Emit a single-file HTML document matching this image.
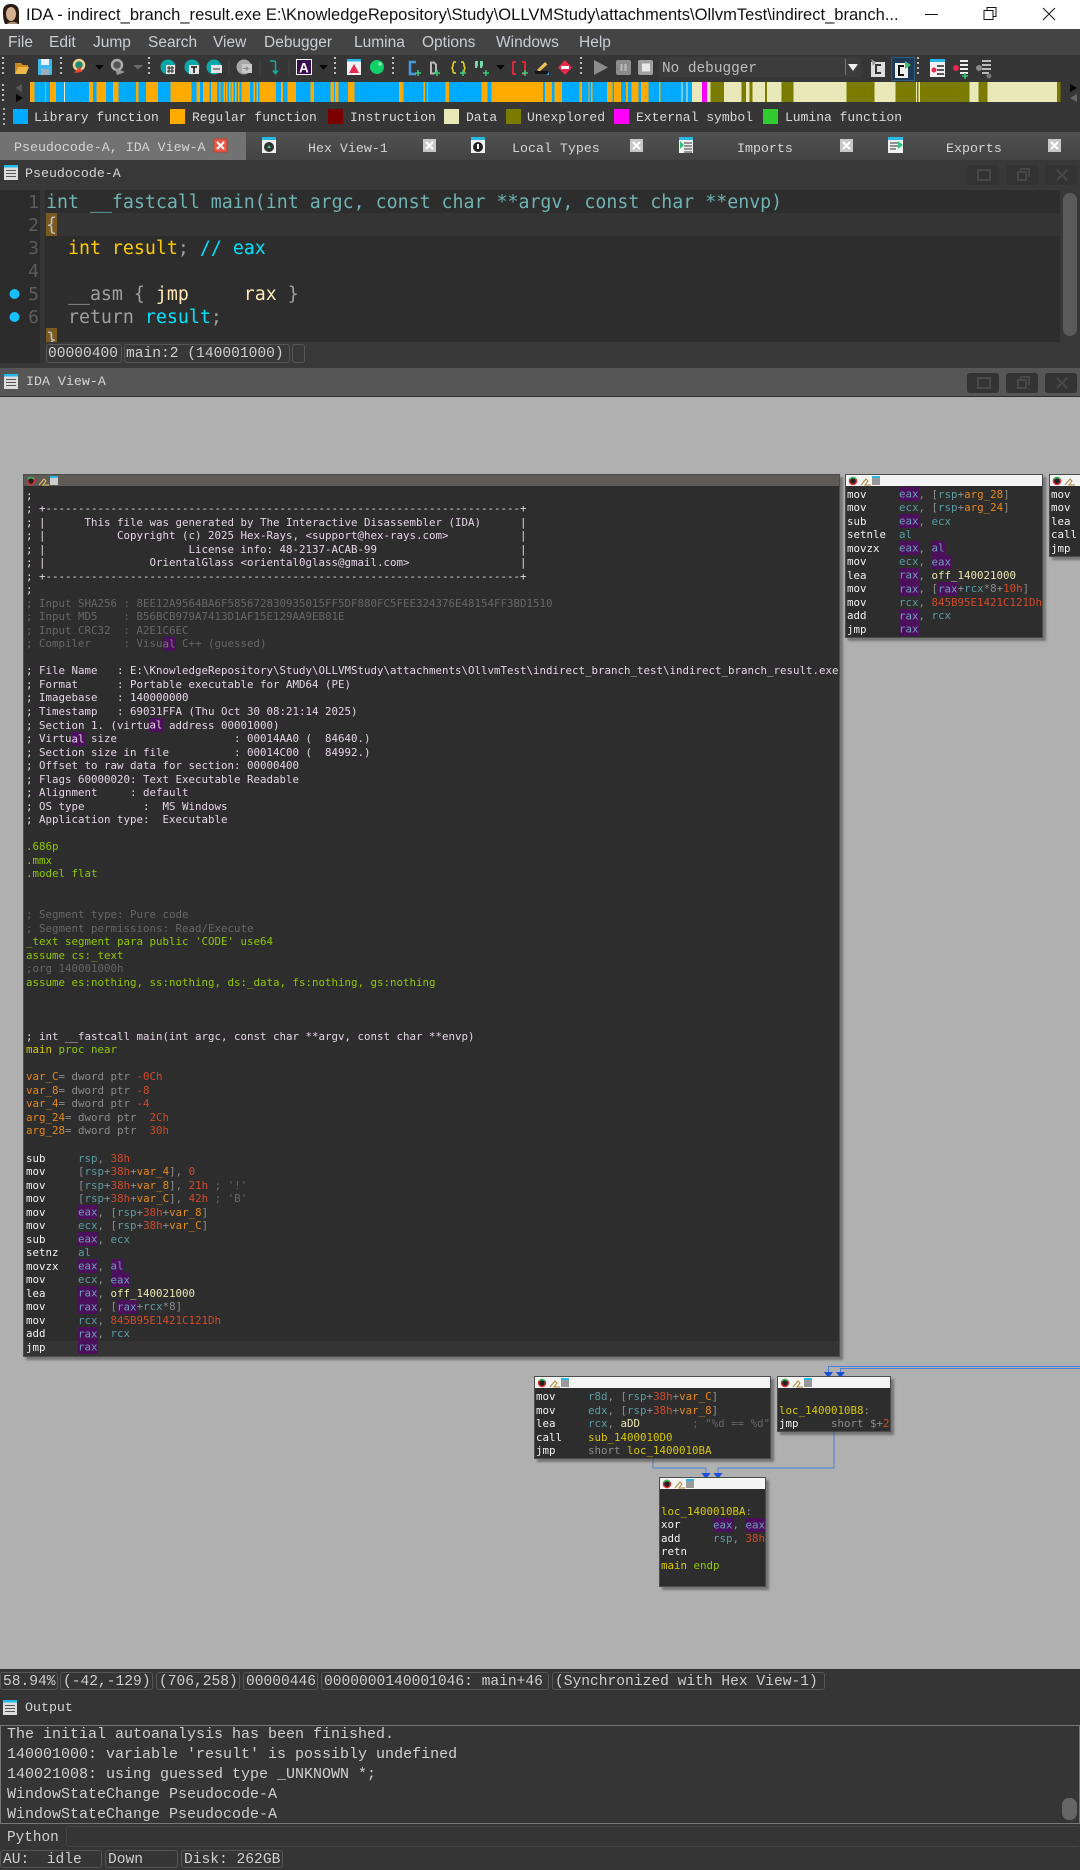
<!DOCTYPE html>
<html><head><meta charset="utf-8"><style>
html,body{margin:0;padding:0;width:1080px;height:1870px;overflow:hidden;background:#383838}
div,pre,span,svg{box-sizing:border-box}
.a{position:absolute}
.m{font-family:"Liberation Mono",monospace}
.mt{position:absolute;top:33px;font:15.5px/20px "Liberation Sans",sans-serif;color:#c9ced4}
.lg{position:absolute;top:109px;font:13px/18px "Liberation Mono",monospace;color:#d8d8d8;white-space:pre}
.sw{position:absolute;top:109px;width:15px;height:15px}
.tb{position:absolute;top:140px;font:13.3px/18px "Liberation Mono",monospace;color:#d4d4d4;white-space:pre}
.pill{position:absolute;border:1px solid #565656;border-radius:3px;font:14.6px/18px "Liberation Mono",monospace;color:#cfcfcf;white-space:pre;overflow:hidden;padding-left:2px}
.bk{position:absolute;background:#2d2d2d;border:1px solid #4c4c4c;box-shadow:3px 3px 2px rgba(60,60,60,.5);overflow:hidden}
.bt{position:absolute;left:0;top:0;right:0;height:11px;background:#f4f4f4}
pre{position:absolute;margin:0;left:1px;font:10.8px/13.53px "DejaVu Sans Mono",monospace;color:#f2f2f2;white-space:pre}
.r{color:#5b9ca3}.h{color:#6f9fb8;background:#4b0f5c;padding:.5px 0}.v{color:#e58a1a}.n{color:#cf4a2a}.g{color:#8c8c8c}
.y{color:#d8c800}.l{color:#8fc800}.c{color:#e4d4e6}.d{color:#666}.s{color:#e9e6b0}
.cd{position:absolute;left:1px;font:18.25px/23px "DejaVu Sans Mono",monospace;white-space:pre}
.ln{position:absolute;left:0;width:39px;text-align:right;font:18px/23px "DejaVu Sans Mono",monospace;color:#5c5c5c}
.wb{position:absolute;width:32px;height:20px;background:#333;border-radius:3px}
.ot{position:absolute;left:7px;font:15px/20px "Liberation Mono",monospace;color:#d0d0d0;white-space:pre}
</style></head><body>
<div class="a" style="left:0;top:0;width:1080px;height:1870px;overflow:hidden">

<!-- title bar -->
<div class="a" style="left:0;top:0;width:1080px;height:29px;background:#fff"></div>
<svg class="a" style="left:0;top:0" width="26" height="29"><path d="M3 11c0-6 5-7 8-7 5 0 8 3 8 8v12H5c-2-4-2-9-2-13z" fill="#2a1c14"/><ellipse cx="11" cy="14" rx="5" ry="7" fill="#d4b090"/><path d="M6 8c3-2 7-2 10 1l-1-4H8z" fill="#2a1c14"/><path d="M7 24c2-3 9-3 11 0z" fill="#a88a70"/></svg>
<div class="a" style="left:26px;top:4px;font:16.55px/22px 'Liberation Sans',sans-serif;color:#111;white-space:pre">IDA - indirect_branch_result.exe E:\KnowledgeRepository\Study\OLLVMStudy\attachments\OllvmTest\indirect_branch...</div>
<svg class="a" style="left:920px;top:0" width="160" height="29" fill="none" stroke="#111" stroke-width="1"><path d="M5 14.5h13M64 10.500h9v9h-9zM67 10.500v-3h9v9h-3"/><path d="M123 8l12 12M135 8l-12 12"/></svg>

<!-- menu -->
<div class="a" style="left:0;top:29px;width:1080px;height:26px;background:#444"></div>
<div class="mt" style="left:8px">File</div><div class="mt" style="left:49px">Edit</div><div class="mt" style="left:93px">Jump</div><div class="mt" style="left:148px">Search</div><div class="mt" style="left:213px">View</div><div class="mt" style="left:264px">Debugger</div><div class="mt" style="left:354px">Lumina</div><div class="mt" style="left:422px">Options</div><div class="mt" style="left:496px">Windows</div><div class="mt" style="left:579px">Help</div>

<!-- toolbar area -->
<div class="a" style="left:0;top:55px;width:1080px;height:77px;background:#363636"></div>
<svg class="a" style="left:0;top:55px" width="1080" height="26">
<g stroke="#bbb" stroke-width="2" stroke-dasharray="2 3"><path d="M3 2v20M61 2v20M149 2v20M335 2v20M393 2v20M581 2v20M918 2v20"/></g>
<!-- folder -->
<path d="M15 8h6l2 2h5v2H18l-3 7z" fill="#c98a1c"/><path d="M18 12h11l-3 7H15z" fill="#f0b848"/>
<!-- save -->
<rect x="38" y="4" width="14" height="16" rx="1" fill="#3cb8ee"/><rect x="41" y="4" width="8" height="6" fill="#e8f4fa"/><rect x="41" y="14" width="8" height="6" fill="#9ab0bc"/>
<!-- back -->
<circle cx="79" cy="10" r="5" fill="#1a8a70" stroke="#ecd090" stroke-width="2.500"/><path d="M74 18l6-7 2 6z" fill="#e8452c"/><path d="M95 10h9l-4.500 4.500z" fill="#050505"/>
<circle cx="117" cy="10" r="5" fill="#555" stroke="#aaa" stroke-width="2.500"/><path d="M115 13l10 4-8 3z" fill="#999"/><path d="M133 10h10l-5 4.500z" fill="#6a6a6a"/>
<!-- teal circles -->
<circle cx="168" cy="12" r="7.500" fill="#0aa8a8"/><rect x="166" y="10" width="9" height="9" fill="#e4e4e4"/><path d="M167 13h7M167 16h7M169 11v7M172 11v7" stroke="#222"/>
<circle cx="192" cy="12" r="7.500" fill="#0aa8a8"/><rect x="189" y="10" width="10" height="9" fill="#e4e4e4"/><path d="M191 12h6M194 12v6" stroke="#111" stroke-width="1.500"/>
<circle cx="214" cy="12" r="7.500" fill="#0aa8a8"/><rect x="211" y="10" width="11" height="8" fill="#e4e4e4"/><path d="M213 14h7" stroke="#333"/>
<circle cx="244" cy="12" r="7.500" fill="#a8a8a8"/><rect x="242" y="9" width="10" height="9" fill="#c8c8c8"/><path d="M243 13.500h5l-2-2m2 2l-2 2" stroke="#888" fill="none"/>
<path d="M229 4v17M260 4v17M289 4v17" stroke="#444"/>
<!-- teal arrow -->
<path d="M270 6h4q1.500 0 1.500 2v9" fill="none" stroke="#18a8a0" stroke-width="1.500"/><path d="M272 15.500h7l-3.500 4.500z" fill="#18a8a0"/>
<!-- A -->
<rect x="296.500" y="4.500" width="15" height="15" fill="#3c0a50" stroke="#fff"/><text x="299" y="17.500" font-family="Liberation Sans" font-weight="bold" font-size="13.500" fill="#fff">A</text><path d="M319 10h9l-4.500 4.500z" fill="#050505"/>
<!-- red tri -->
<rect x="347" y="5" width="14" height="15" fill="#f0f0f0"/><rect x="347" y="4" width="14" height="2.500" fill="#28b8e8"/><path d="M349 18l5-9 5 9z" fill="#e8284c"/>
<circle cx="377" cy="12" r="7" fill="#10d068"/><circle cx="380" cy="9" r="1.800" fill="#90f0b0"/>
<!-- C D {} "" [] -->
<path d="M416 7h-6v12h6" fill="none" stroke="#4a98e0" stroke-width="2.500"/>
<path d="M431 7.500h3l2 2v8l-2 1h-3z" fill="none" stroke="#b8b8b8" stroke-width="2"/>
<path d="M456 7h-2l-1 2v2l-1 2 1 2v2l1 1h2M461 7h2l1 2v2l1 2-1 2v2l-1 1h-2" fill="none" stroke="#e8d820" stroke-width="1.500"/>
<path d="M475 6h3v4l-1 3h-2zM480 6h3v4l-1 3h-2z" fill="#78d8a8"/><path d="M496 10h9l-4.500 4.500z" fill="#050505"/>
<path d="M516 7h-3v12h3M522 7h3v12h-3" fill="none" stroke="#e82838" stroke-width="1.800"/>
<path d="M415 18h6M418 15v6M434 18h6M437 15v6M460 18h6M463 15v6M483 18h6M486 15v6M522 18h6M525 15v6" stroke="#3cc878" stroke-width="1.500"/>
<path d="M537 15l8-8 2.500 2.500-8 7z" fill="#ecc060"/><rect x="535" y="16" width="13" height="3" fill="#151515"/><path d="M546 20h3v-3z" fill="#2a90d0"/>
<path d="M565 5l7 7.500-7 7.500-7-7.500z" fill="#e8284c"/><rect x="561" y="11" width="8" height="3" fill="#fff"/>
<!-- debug -->
<path d="M594 5l14 7.500-14 7.500z" fill="#8c8c8c"/><rect x="616" y="5" width="15" height="15" rx="2" fill="#8c8c8c"/><path d="M621.500 9v7M625.500 9v7" stroke="#bbb" stroke-width="2"/><rect x="638" y="5" width="15" height="15" rx="2" fill="#a0a0a0"/><rect x="642" y="8.500" width="8" height="8" fill="#e8e8e8"/>
<!-- right icons -->
<rect x="871" y="7" width="14" height="15" fill="#ddd"/><path d="M881 10h-5v8h5" fill="none" stroke="#333" stroke-width="2"/><path d="M871 4l5 3-3 4z" fill="#999"/>
<rect x="891.500" y="2.500" width="23" height="23" fill="#1f3a52" stroke="#2c5c82"/><rect x="895" y="8" width="13" height="15" fill="#eee"/><path d="M904 11h-5v9h5" fill="none" stroke="#111" stroke-width="2"/><path d="M905 6l6 4-6 4z" fill="#3cc070"/>
<rect x="930" y="6" width="15" height="16" fill="#f0f0f0"/><rect x="930" y="4" width="15" height="3" fill="#28b8e8"/><circle cx="934" cy="15" r="2.500" fill="#e8284c"/><path d="M937 11h7M937 15h7M937 19h7" stroke="#222" stroke-width="1.500"/>
<circle cx="956" cy="13" r="3" fill="#e8284c"/><path d="M960 6h8M960 10h8M960 14h8M960 18h8" stroke="#eee" stroke-width="2"/><path d="M962 21h6M965 18v6" stroke="#3cc070" stroke-width="1.500"/>
<circle cx="979" cy="13" r="3" fill="#888"/><path d="M982 6h9M982 10h9M982 14h9M982 18h7" stroke="#bbb" stroke-width="2"/><circle cx="989" cy="21" r="2.500" fill="#777"/>
</svg>
<div class="a" style="left:659px;top:57px;width:202px;height:20px;background:#3c3c3c;border-radius:3px"></div>
<div class="a m" style="left:662px;top:60px;font-size:14.400px;line-height:18px;color:#bdbdbd;white-space:pre">No debugger</div>
<div class="a" style="left:845px;top:59px;width:1px;height:16px;background:#777"></div>
<svg class="a" style="left:846px;top:60px" width="14" height="14"><path d="M2 4h10l-5 7z" fill="#f0f0f0"/></svg>

<!-- nav strip -->
<svg class="a" style="left:0;top:80px" width="1080" height="24" shape-rendering="crispEdges">
<path d="M15 8l7-4v8z" fill="#555"/><path d="M16 14l7 4-7 4z" fill="#000"/><path d="M1070 4l7 4-7 4z" fill="#000"/><path d="M1077 14l-7 4 7 4z" fill="#666"/>
<path d="M3 4v18" stroke="#bbb" stroke-width="2" stroke-dasharray="2 3"/>
<rect x="30" y="2" width="1030" height="20" fill="#00aaff"/>
<g fill="#ffaa00" transform="scale(.3448,1)"><rect x="87" y="2" width="13" height="20"/><rect x="130" y="2" width="4" height="20"/><rect x="145" y="2" width="18" height="20"/><rect x="186" y="2" width="3" height="20" fill="#e8e8b8"/><rect x="258" y="2" width="12" height="20"/><rect x="280" y="2" width="28" height="20"/><rect x="328" y="2" width="16" height="20"/><rect x="395" y="2" width="6" height="20"/><rect x="424" y="2" width="34" height="20"/><rect x="494" y="2" width="61" height="20"/><rect x="570" y="2" width="10" height="20"/><rect x="589" y="2" width="19" height="20"/><rect x="612" y="2" width="18" height="20"/><rect x="636" y="2" width="4" height="20"/><rect x="648" y="2" width="4" height="20"/><rect x="656" y="2" width="4" height="20"/><rect x="664" y="2" width="4" height="20"/><rect x="672" y="2" width="5" height="20"/><rect x="682" y="2" width="4" height="20"/><rect x="690" y="2" width="4" height="20"/><rect x="700" y="2" width="25" height="20"/><rect x="735" y="2" width="4" height="20"/><rect x="744" y="2" width="4" height="20"/><rect x="752" y="2" width="48" height="20"/><rect x="815" y="2" width="6" height="20"/><rect x="834" y="2" width="24" height="20"/><rect x="900" y="2" width="10" height="20"/><rect x="958" y="2" width="10" height="20"/><rect x="972" y="2" width="10" height="20"/><rect x="1010" y="2" width="18" height="20"/><rect x="1157" y="2" width="13" height="20"/><rect x="1228" y="2" width="4" height="20"/><rect x="1238" y="2" width="3" height="20"/><rect x="1292" y="2" width="10" height="20"/><rect x="1397" y="2" width="17" height="20"/><rect x="1425" y="2" width="143" height="20"/></g>
<g fill="#ffaa00" transform="translate(540,0) scale(.3448,1)"><rect x="0" y="2" width="8" height="20"/><rect x="15" y="2" width="20" height="20"/><rect x="42" y="2" width="22" height="20"/><rect x="115" y="2" width="7" height="20"/><rect x="140" y="2" width="4" height="20"/><rect x="148" y="2" width="4" height="20"/><rect x="195" y="2" width="15" height="20"/><rect x="215" y="2" width="20" height="20"/><rect x="250" y="2" width="5" height="20"/><rect x="265" y="2" width="20" height="20"/><rect x="293" y="2" width="22" height="20"/><rect x="345" y="2" width="5" height="20"/><rect x="411" y="2" width="3" height="20" fill="#e8e8b8"/><rect x="425" y="2" width="3" height="20" fill="#e8e8b8"/>
<rect x="441" y="2" width="1069" height="20" fill="#e8e8b8"/><rect x="470" y="2" width="15" height="20" fill="#ff00ff"/><rect x="495" y="2" width="39" height="20" fill="#7b7b00"/><rect x="585" y="2" width="12" height="20" fill="#7b7b00"/><rect x="607" y="2" width="9" height="20" fill="#7b7b00"/><rect x="652" y="2" width="6" height="20" fill="#7b7b00"/><rect x="700" y="2" width="35" height="20" fill="#7b7b00"/><rect x="889" y="2" width="81" height="20" fill="#7b7b00"/><rect x="1031" y="2" width="59" height="20" fill="#7b7b00"/><rect x="1094" y="2" width="4" height="20" fill="#7b7b00"/><rect x="1102" y="2" width="144" height="20" fill="#7b7b00"/><rect x="1272" y="2" width="26" height="20" fill="#7b7b00"/><rect x="1500" y="2" width="10" height="20" fill="#7b7b00"/></g>
</svg>

<!-- legend -->
<svg class="a" style="left:0;top:106px" width="8" height="24"><path d="M4 2v20" stroke="#aaa" stroke-width="2" stroke-dasharray="2 3"/></svg>
<div class="sw" style="left:13px;background:#00aaff"></div><div class="lg" style="left:34px">Library function</div>
<div class="sw" style="left:170px;background:#ffaa00"></div><div class="lg" style="left:192px">Regular function</div>
<div class="sw" style="left:328px;background:#7a0000"></div><div class="lg" style="left:350px">Instruction</div>
<div class="sw" style="left:444px;background:#e8e8b8"></div><div class="lg" style="left:466px">Data</div>
<div class="sw" style="left:506px;background:#7b7b00"></div><div class="lg" style="left:527px">Unexplored</div>
<div class="sw" style="left:614px;background:#ff00ff"></div><div class="lg" style="left:636px">External symbol</div>
<div class="sw" style="left:763px;background:#30cc30"></div><div class="lg" style="left:785px">Lumina function</div>

<!-- tabs -->
<div class="a" style="left:0;top:132px;width:1080px;height:28px;background:linear-gradient(#515151,#434343)"></div>
<div class="a" style="left:0;top:132px;width:246px;height:28px;background:#727272"></div>
<div class="tb" style="left:14px;top:139px">Pseudocode-A, IDA View-A</div><div class="tb" style="left:308px">Hex View-1</div><div class="tb" style="left:512px">Local Types</div><div class="tb" style="left:737px">Imports</div><div class="tb" style="left:946px">Exports</div>
<svg class="a" style="left:0;top:132px" width="1080" height="28">
<rect x="214" y="7" width="13" height="13" fill="#e85a4a" stroke="#c04030"/><path d="M217 10l7 7M224 10l-7 7" stroke="#fff" stroke-width="2"/>
<g fill="#c8c8c8"><rect x="423" y="7" width="13" height="13"/><rect x="630" y="7" width="13" height="13"/><rect x="840" y="7" width="13" height="13"/><rect x="1048" y="7" width="13" height="13"/></g>
<path d="M426 10l7 7M433 10l-7 7M633 10l7 7M640 10l-7 7M843 10l7 7M850 10l-7 7M1051 10l7 7M1058 10l-7 7" stroke="#fff" stroke-width="2"/>
<g fill="#f0f0f0"><rect x="262" y="7" width="14" height="14"/><rect x="471" y="7" width="14" height="14"/><rect x="679" y="7" width="14" height="14"/><rect x="888" y="7" width="15" height="14"/></g>
<g fill="#28b8e8"><rect x="262" y="5" width="14" height="3"/><rect x="471" y="5" width="14" height="3"/><rect x="679" y="5" width="14" height="3"/><rect x="888" y="5" width="15" height="3"/></g>
<circle cx="269" cy="15" r="5" fill="#333"/><path d="M267 16l2-3 2 3z" fill="#30d080"/><circle cx="478" cy="15" r="5" fill="#222"/><rect x="477" y="12" width="2" height="5" fill="#fff"/>
<path d="M684 11h8M684 14h8M684 17h8M684 20h8M890 11h8M890 14h8M890 17h6" stroke="#333"/><path d="M680 9l4 4-4 4z" fill="#30c080"/><path d="M898 9l5 4-5 4z" fill="#30c080"/>
</svg>

<!-- Pseudocode panel -->
<div class="a" style="left:0;top:160px;width:1080px;height:208px;background:#383838"></div>
<svg class="a" style="left:4px;top:165px" width="14" height="16"><rect width="14" height="13" y="2" fill="#ddd"/><rect width="14" height="2.500" y="0" fill="#28b8e8"/><path d="M2 5.500h10M2 8.500h10M2 11.500h10" stroke="#555"/></svg>
<div class="a m" style="left:25px;top:165px;font-size:13.300px;line-height:18px;color:#d4d4d4">Pseudocode-A</div>
<div class="wb" style="left:967px;top:165px"></div><div class="wb" style="left:1006px;top:165px"></div><div class="wb" style="left:1045px;top:165px"></div>
<svg class="a" style="left:960px;top:165px" width="120" height="20" fill="none" stroke="#474747" stroke-width="2"><path d="M18 5h12v10H18zM58 7h8v8h-8zM61 7V4h8v8M97 5l10 10M107 5L97 15"/></svg>
<div class="a" style="left:0;top:190px;width:40px;height:173px;background:#2b2b2b"></div>
<div class="a" style="left:40px;top:190px;width:5px;height:173px;background:#353535"></div>
<div class="a" style="left:45px;top:190px;width:1015px;height:152px;background:#2d2d2d;overflow:hidden">
<div class="a" style="left:0;top:23px;width:1015px;height:23px;background:#343434"></div>
<div class="a" style="left:1px;top:23px;width:11px;height:23px;background:#7a5a20"></div>
<div class="a" style="left:1px;top:138px;width:11px;height:14px;background:#7a5a20"></div>
<div class="cd" style="top:1px;color:#6fb3b3">int __fastcall main(int argc, const char **argv, const char **envp)</div>
<div class="cd" style="top:24px;color:#c0c0c0">{</div>
<div class="cd" style="top:47px;color:#ffcc00">  int result<span style="color:#a0a0a0">;</span> <span style="color:#00e5ff">// eax</span></div>
<div class="cd" style="top:93px;color:#a0a0a0">  __asm { <span style="color:#ffe9b8">jmp     rax</span> }</div>
<div class="cd" style="top:116px;color:#a0a0a0">  return <span style="color:#00e5ff">result</span>;</div>
<div class="cd" style="top:139px;color:#c0c0c0">}</div>
</div>
<div class="ln" style="top:191px">1</div><div class="ln" style="top:214px">2</div><div class="ln" style="top:237px">3</div><div class="ln" style="top:260px">4</div><div class="ln" style="top:283px">5</div><div class="ln" style="top:306px">6</div>
<svg class="a" style="left:8px;top:285px" width="14" height="40"><circle cx="6.500" cy="9" r="5" fill="#18bfff"/><circle cx="6.500" cy="32" r="5" fill="#18bfff"/></svg>
<div class="a" style="left:1063px;top:193px;width:14px;height:143px;border-radius:7px;background:#5a5a5a"></div>
<div class="pill" style="left:46px;top:344px;width:76px;height:19px;padding-left:1px">00000400</div>
<div class="pill" style="left:124px;top:344px;width:166px;height:19px;padding-left:1px">main:2 (140001000)</div>
<div class="pill" style="left:292px;top:344px;width:13px;height:19px"></div>

<!-- IDA View title -->
<div class="a" style="left:0;top:368px;width:1080px;height:28px;background:#565656"></div>
<div class="a" style="left:0;top:396px;width:1080px;height:1px;background:#2e2e2e"></div>
<svg class="a" style="left:4px;top:374px" width="14" height="16"><rect width="14" height="13" y="2" fill="#ddd"/><rect width="14" height="2.500" y="0" fill="#28b8e8"/><path d="M2 5.500h10M2 8.500h10M2 11.500h10" stroke="#555"/></svg>
<div class="a m" style="left:26px;top:373px;font-size:13.300px;line-height:18px;color:#d4d4d4">IDA View-A</div>
<div class="wb" style="left:967px;top:373px"></div><div class="wb" style="left:1006px;top:373px"></div><div class="wb" style="left:1045px;top:373px"></div>
<svg class="a" style="left:960px;top:373px" width="120" height="20" fill="none" stroke="#484848" stroke-width="2"><path d="M18 5h12v10H18zM58 7h8v8h-8zM61 7V4h8v8M97 5l10 10M107 5L97 15"/></svg>

<!-- Graph -->
<div class="a" style="left:0;top:397px;width:1080px;height:1272px;background:#b0b0b0"></div>

<svg class="a" style="left:0;top:1340px" width="1080" height="150" fill="none">
<path d="M1080 26.500H828.500V36M1080 28.500H840.500V36" stroke="#4a7fd8" stroke-width="1"/>
<path d="M653 119v9h53v10M834 92v36H718v10" stroke="#4a7fd8" stroke-width="1"/>
<path d="M824 32h9l-4.500 6zM836 32h9l-4.500 6z" fill="#1750d8"/><path d="M701.500 133h9l-4.500 6zM713.500 133h9l-4.500 6z" fill="#1750d8"/>
</svg>

<!-- main block -->
<div class="bk" style="left:23px;top:474px;width:817px;height:883px">
<div class="bt" style="background:#5e5a55"></div>
<svg class="a" style="left:2px;top:1px" width="34" height="10"><circle cx="5" cy="5" r="3.500" fill="#222" stroke="#e03030" stroke-width="1.500"/><path d="M2 3a4 4 0 0 1 6 0" stroke="#30c060" stroke-width="1.500" fill="none"/><path d="M13 9l5-6 2 2-3 4h6" stroke="#ecc060" fill="none"/><rect x="24" y="1" width="8" height="8" fill="#ccc"/><rect x="24" y="0" width="8" height="2" fill="#28b8e8"/></svg>
<div class="a" style="left:0;top:866px;width:817px;height:15px;background:#343434"></div>
<pre style="top:13.500px;left:2px"><span class="c">;
; +-------------------------------------------------------------------------+
; |      This file was generated by The Interactive Disassembler (IDA)      |
; |           Copyright (c) 2025 Hex-Rays, &lt;support@hex-rays.com&gt;           |
; |                      License info: 48-2137-ACAB-99                      |
; |                OrientalGlass &lt;oriental0glass@gmail.com&gt;                 |
; +-------------------------------------------------------------------------+
;
</span><span class="d">; Input SHA256 : 8EE12A9564BA6F585672830935015FF5DF880FC5FEE324376E48154FF3BD1510
; Input MD5    : B56BCB979A7413D1AF15E129AA9EB01E
; Input CRC32  : A2E1C6EC
; Compiler     : Visu<span class="h" style="color:#777">al</span> C++ (guessed)
</span>
<span class="c">; File Name   : E:\KnowledgeRepository\Study\OLLVMStudy\attachments\OllvmTest\indirect_branch_test\indirect_branch_result.exe
; Format      : Portable executable for AMD64 (PE)
; Imagebase   : 140000000
; Timestamp   : 69031FFA (Thu Oct 30 08:21:14 2025)
; Section 1. (virtu<span class="h" style="color:#e4d4e6">al</span> address 00001000)
; Virtu<span class="h" style="color:#e4d4e6">al</span> size                  : 00014AA0 (  84640.)
; Section size in file          : 00014C00 (  84992.)
; Offset to raw data for section: 00000400
; Flags 60000020: Text Executable Readable
; Alignment     : default
; OS type         :  MS Windows
; Application type:  Executable
</span>
<span class="l">.686p
.mmx
.model flat</span>


<span class="d">; Segment type: Pure code
; Segment permissions: Read/Execute</span>
<span class="l">_text segment para public 'CODE' use64
assume cs:_text</span>
<span class="d">;org 140001000h</span>
<span class="l">assume es:nothing, ss:nothing, ds:_data, fs:nothing, gs:nothing</span>



<span class="c">; int __fastcall main(int argc, const char **argv, const char **envp)</span>
<span class="y">main</span> <span class="l">proc near</span>

<span class="v">var_C</span><span class="g">= dword ptr </span><span class="n">-0Ch</span>
<span class="v">var_8</span><span class="g">= dword ptr </span><span class="n">-8</span>
<span class="v">var_4</span><span class="g">= dword ptr </span><span class="n">-4</span>
<span class="v">arg_24</span><span class="g">= dword ptr  </span><span class="n">2Ch</span>
<span class="v">arg_28</span><span class="g">= dword ptr  </span><span class="n">30h</span>

sub     <span class="r">rsp</span><span class="g">, </span><span class="n">38h</span>
mov     <span class="g">[</span><span class="r">rsp</span><span class="g">+</span><span class="n">38h</span><span class="g">+</span><span class="v">var_4</span><span class="g">], </span><span class="n">0</span>
mov     <span class="g">[</span><span class="r">rsp</span><span class="g">+</span><span class="n">38h</span><span class="g">+</span><span class="v">var_8</span><span class="g">], </span><span class="n">21h</span> <span class="d">; '!'</span>
mov     <span class="g">[</span><span class="r">rsp</span><span class="g">+</span><span class="n">38h</span><span class="g">+</span><span class="v">var_C</span><span class="g">], </span><span class="n">42h</span> <span class="d">; 'B'</span>
mov     <span class="h">eax</span><span class="g">, [</span><span class="r">rsp</span><span class="g">+</span><span class="n">38h</span><span class="g">+</span><span class="v">var_8</span><span class="g">]</span>
mov     <span class="r">ecx</span><span class="g">, [</span><span class="r">rsp</span><span class="g">+</span><span class="n">38h</span><span class="g">+</span><span class="v">var_C</span><span class="g">]</span>
sub     <span class="h">eax</span><span class="g">, </span><span class="r">ecx</span>
setnz   <span class="r">al</span>
movzx   <span class="h">eax</span><span class="g">, </span><span class="h">al</span>
mov     <span class="r">ecx</span><span class="g">, </span><span class="h">eax</span>
lea     <span class="h">rax</span><span class="g">, </span><span class="s">off_140021000</span>
mov     <span class="h">rax</span><span class="g">, [</span><span class="h">rax</span><span class="g">+</span><span class="r">rcx</span><span class="g">*8]</span>
mov     <span class="r">rcx</span><span class="g">, </span><span class="n">845B95E1421C121Dh</span>
add     <span class="h">rax</span><span class="g">, </span><span class="r">rcx</span>
jmp     <span class="h">rax</span></pre>
</div>

<!-- right block -->
<div class="bk" style="left:845px;top:474px;width:198px;height:164px">
<div class="bt"></div>
<svg class="a" style="left:2px;top:1px" width="34" height="10"><circle cx="5" cy="5" r="3.500" fill="#222" stroke="#e03030" stroke-width="1.500"/><path d="M2 3a4 4 0 0 1 6 0" stroke="#30c060" stroke-width="1.500" fill="none"/><path d="M13 9l5-6 2 2-3 4h6" stroke="#b08830" fill="none"/><rect x="24" y="1" width="8" height="8" fill="#999"/><rect x="24" y="0" width="8" height="2" fill="#28b8e8"/></svg>
<pre style="top:12.500px">mov     <span class="h">eax</span><span class="g">, [</span><span class="r">rsp</span><span class="g">+</span><span class="v">arg_28</span><span class="g">]</span>
mov     <span class="r">ecx</span><span class="g">, [</span><span class="r">rsp</span><span class="g">+</span><span class="v">arg_24</span><span class="g">]</span>
sub     <span class="h">eax</span><span class="g">, </span><span class="r">ecx</span>
setnle  <span class="r">al</span>
movzx   <span class="h">eax</span><span class="g">, </span><span class="h">al</span>
mov     <span class="r">ecx</span><span class="g">, </span><span class="h">eax</span>
lea     <span class="h">rax</span><span class="g">, </span><span class="s">off_140021000</span>
mov     <span class="h">rax</span><span class="g">, [</span><span class="h">rax</span><span class="g">+</span><span class="r">rcx</span><span class="g">*8+</span><span class="n">10h</span><span class="g">]</span>
mov     <span class="r">rcx</span><span class="g">, </span><span class="n">845B95E1421C121Dh</span>
add     <span class="h">rax</span><span class="g">, </span><span class="r">rcx</span>
jmp     <span class="h">rax</span></pre>
</div>

<div class="bk" style="left:1049px;top:474px;width:40px;height:83px">
<div class="bt"></div>
<svg class="a" style="left:2px;top:1px" width="34" height="10"><circle cx="5" cy="5" r="3.500" fill="#222" stroke="#e03030" stroke-width="1.500"/><path d="M2 3a4 4 0 0 1 6 0" stroke="#30c060" stroke-width="1.500" fill="none"/><path d="M13 9l5-6 2 2-3 4h6" stroke="#b08830" fill="none"/></svg>
<pre style="top:12.500px">mov
mov
lea
call
jmp</pre>
</div>

<div class="bk" style="left:534px;top:1376px;width:237px;height:83px">
<div class="bt"></div>
<svg class="a" style="left:2px;top:1px" width="34" height="10"><circle cx="5" cy="5" r="3.500" fill="#222" stroke="#e03030" stroke-width="1.500"/><path d="M2 3a4 4 0 0 1 6 0" stroke="#30c060" stroke-width="1.500" fill="none"/><path d="M13 9l5-6 2 2-3 4h6" stroke="#b08830" fill="none"/><rect x="24" y="1" width="8" height="8" fill="#999"/><rect x="24" y="0" width="8" height="2" fill="#28b8e8"/></svg>
<pre style="top:13px">mov     <span class="r">r8d</span><span class="g">, [</span><span class="r">rsp</span><span class="g">+</span><span class="n">38h</span><span class="g">+</span><span class="v">var_C</span><span class="g">]</span>
mov     <span class="r">edx</span><span class="g">, [</span><span class="r">rsp</span><span class="g">+</span><span class="n">38h</span><span class="g">+</span><span class="v">var_8</span><span class="g">]</span>
lea     <span class="r">rcx</span><span class="g">, </span><span class="s">aDD</span>        <span class="d">; "%d == %d"</span>
call    <span class="y">sub_1400010D0</span>
jmp     <span class="g">short </span><span class="y">loc_1400010BA</span></pre>
</div>

<div class="bk" style="left:777px;top:1376px;width:114px;height:56px">
<div class="bt"></div>
<svg class="a" style="left:2px;top:1px" width="34" height="10"><circle cx="5" cy="5" r="3.500" fill="#222" stroke="#e03030" stroke-width="1.500"/><path d="M2 3a4 4 0 0 1 6 0" stroke="#30c060" stroke-width="1.500" fill="none"/><path d="M13 9l5-6 2 2-3 4h6" stroke="#b08830" fill="none"/><rect x="24" y="1" width="8" height="8" fill="#999"/><rect x="24" y="0" width="8" height="2" fill="#28b8e8"/></svg>
<pre style="top:26.500px"><span class="y">loc_1400010B8</span><span class="g">:</span>
jmp     <span class="g">short $+</span><span class="n">2</span></pre>
</div>

<div class="bk" style="left:659px;top:1477px;width:107px;height:110px">
<div class="bt"></div>
<svg class="a" style="left:2px;top:1px" width="34" height="10"><circle cx="5" cy="5" r="3.500" fill="#222" stroke="#e03030" stroke-width="1.500"/><path d="M2 3a4 4 0 0 1 6 0" stroke="#30c060" stroke-width="1.500" fill="none"/><path d="M13 9l5-6 2 2-3 4h6" stroke="#b08830" fill="none"/><rect x="24" y="1" width="8" height="8" fill="#999"/><rect x="24" y="0" width="8" height="2" fill="#28b8e8"/></svg>
<pre style="top:26.500px"><span class="y">loc_1400010BA</span><span class="g">:</span>
xor     <span class="h">eax</span><span class="g">, </span><span class="h">eax</span>
add     <span class="r">rsp</span><span class="g">, </span><span class="n">38h</span>
retn
<span class="y">main</span> <span class="l">endp</span></pre>
</div>

<!-- status bar -->
<div class="a" style="left:0;top:1669px;width:1080px;height:201px;background:#353535"></div>
<div class="pill" style="left:0;top:1672px;width:58px;height:18px">58.94%</div>
<div class="pill" style="left:60px;top:1672px;width:93px;height:18px">(-42,-129)</div>
<div class="pill" style="left:156px;top:1672px;width:84px;height:18px">(706,258)</div>
<div class="pill" style="left:243px;top:1672px;width:75px;height:18px">00000446</div>
<div class="pill" style="left:321px;top:1672px;width:228px;height:18px">0000000140001046: main+46</div>
<div class="pill" style="left:552px;top:1672px;width:273px;height:18px">(Synchronized with Hex View-1)</div>

<!-- output -->
<svg class="a" style="left:3px;top:1700px" width="14" height="16"><rect width="14" height="13" y="2" fill="#ddd"/><rect width="14" height="2.500" y="0" fill="#28b8e8"/><path d="M2 5.500h10M2 8.500h10M2 11.500h10" stroke="#555"/></svg>
<div class="a m" style="left:25px;top:1699px;font-size:13.300px;line-height:18px;color:#d4d4d4">Output</div>
<div class="a" style="left:0;top:1725px;width:1080px;height:99px;border:1px solid #777;background:#353535"></div>
<div class="ot" style="top:1725px">The initial autoanalysis has been finished.</div>
<div class="ot" style="top:1745px">140001000: variable 'result' is possibly undefined</div>
<div class="ot" style="top:1765px">140021008: using guessed type _UNKNOWN *;</div>
<div class="ot" style="top:1785px">WindowStateChange Pseudocode-A</div>
<div class="ot" style="top:1805px">WindowStateChange Pseudocode-A</div>
<div class="a" style="left:1062px;top:1798px;width:15px;height:22px;border-radius:7px;background:#666"></div>
<div class="a m" style="left:7px;top:1829px;font-size:14.400px;line-height:18px;color:#d0d0d0">Python</div>
<div class="a" style="left:66px;top:1826px;width:1014px;height:21px;border:1px solid #444;border-right:0;border-radius:3px"></div>
<div class="pill" style="left:0;top:1850px;width:102px;height:18px">AU:  idle</div>
<div class="pill" style="left:105px;top:1850px;width:73px;height:18px">Down</div>
<div class="pill" style="left:181px;top:1850px;width:102px;height:18px">Disk: 262GB</div>
</div>
</body></html>
